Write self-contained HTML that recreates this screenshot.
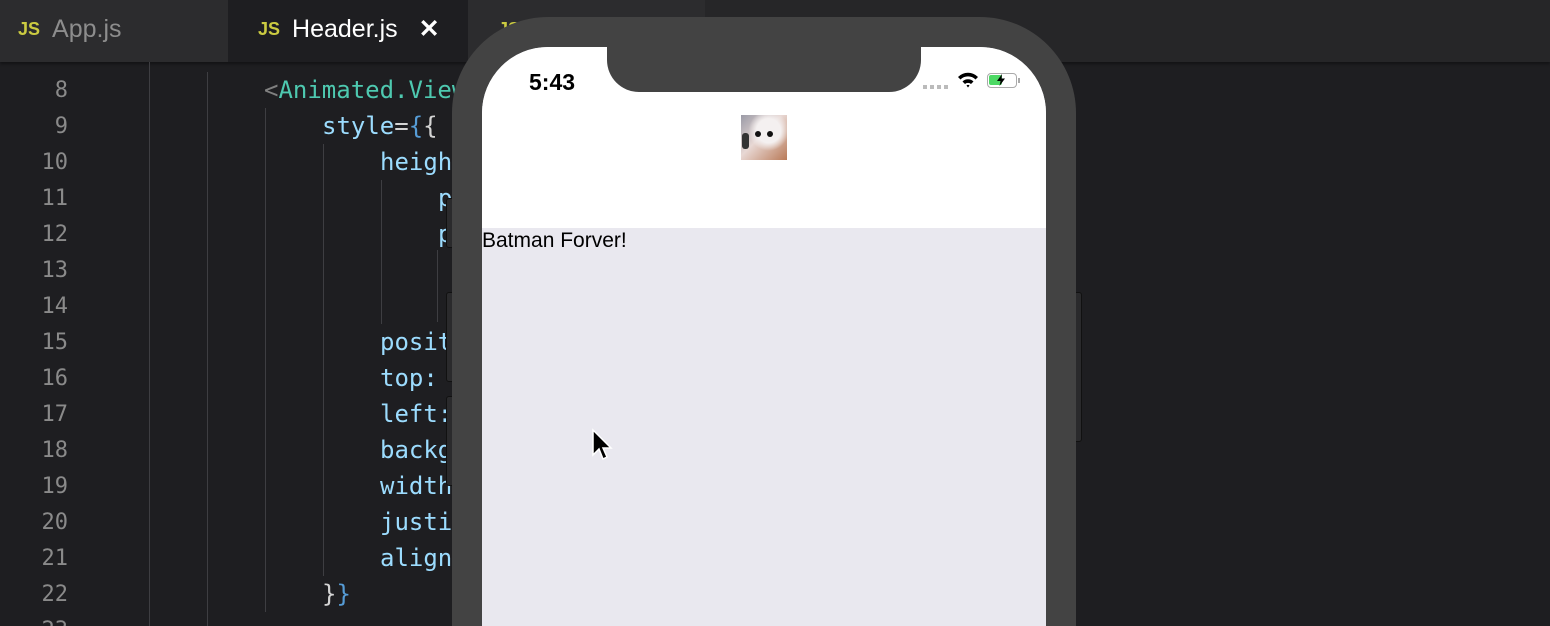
<!DOCTYPE html>
<html style="width:1550px;height:626px;overflow:hidden"><head><style>
*{margin:0;padding:0;box-sizing:border-box}
body{width:1550px;height:626px;overflow:hidden;background:#1e1e21;position:relative;font-family:"DejaVu Sans Mono","Liberation Mono",monospace}
.tabbar{position:absolute;left:0;top:0;width:1550px;height:62px;background:#262628;box-shadow:0 2px 3px rgba(0,0,0,.4)}
.tab{position:absolute;top:0;height:62px;font-family:"Liberation Sans",sans-serif;font-size:25px;line-height:58px}
.js{font-weight:bold;color:#cbcb41;font-size:18px;margin-right:12px;vertical-align:2px}
.ln{position:absolute;left:0;width:68px;text-align:right;color:#8a8a8a;font-size:22px}
.code{position:absolute;font-size:24px;color:#9cdcfe;white-space:pre}
.g{position:absolute;width:1px;background:#3e3e42}
</style></head><body>
<div class="tabbar"></div>
<div class="tab" style="left:0;width:228px;background:#2c2c2e;padding-left:18px;color:#8d8d8d"><span class="js">JS</span>App.js</div>
<div class="tab" style="left:228px;width:240px;background:#1e1e21;padding-left:30px;color:#fff"><span class="js">JS</span>Header.js <span style="margin-left:14px;font-weight:bold">✕</span></div>
<div class="tab" style="left:468px;width:237px;background:#2c2c2e;padding-left:30px;color:#8d8d8d"><span class="js">JS</span></div>

<div class="g" style="left:149px;top:62px;height:564px"></div>
<div class="g" style="left:207px;top:72px;height:554px"></div>
<div class="g" style="left:265px;top:108px;height:504px"></div>
<div class="g" style="left:323px;top:144px;height:432px"></div>
<div class="g" style="left:381px;top:180px;height:144px"></div>
<div class="g" style="left:437px;top:250px;height:72px"></div>

<div class="ln" style="top:78px">8</div>
<div class="ln" style="top:114px">9</div>
<div class="ln" style="top:150px">10</div>
<div class="ln" style="top:186px">11</div>
<div class="ln" style="top:222px">12</div>
<div class="ln" style="top:258px">13</div>
<div class="ln" style="top:294px">14</div>
<div class="ln" style="top:330px">15</div>
<div class="ln" style="top:366px">16</div>
<div class="ln" style="top:402px">17</div>
<div class="ln" style="top:438px">18</div>
<div class="ln" style="top:474px">19</div>
<div class="ln" style="top:510px">20</div>
<div class="ln" style="top:546px">21</div>
<div class="ln" style="top:582px">22</div>
<div class="ln" style="top:618px">23</div>

<div class="code" style="left:264px;top:76px"><span style="color:#808080">&lt;</span><span style="color:#4ec9b0">Animated.View</span></div>
<div class="code" style="left:322px;top:112px">style<span style="color:#d4d4d4">=</span><span style="color:#569cd6">{</span><span style="color:#d4d4d4">{</span></div>
<div class="code" style="left:380px;top:148px">height</div>
<div class="code" style="left:438px;top:184px">p</div>
<div class="code" style="left:438px;top:220px">p</div>
<div class="code" style="left:380px;top:328px">position</div>
<div class="code" style="left:380px;top:364px">top:</div>
<div class="code" style="left:380px;top:400px">left:</div>
<div class="code" style="left:380px;top:436px">backg</div>
<div class="code" style="left:380px;top:472px">width</div>
<div class="code" style="left:380px;top:508px">justi</div>
<div class="code" style="left:380px;top:544px">align</div>
<div class="code" style="left:322px;top:580px"><span style="color:#d4d4d4">}</span><span style="color:#569cd6">}</span></div>

<div style="position:absolute;left:446px;top:198px;width:10px;height:50px;background:#2a2a2c;border:1px solid #111;border-radius:3px"></div>
<div style="position:absolute;left:446px;top:292px;width:10px;height:90px;background:#2a2a2c;border:1px solid #111;border-radius:3px"></div>
<div style="position:absolute;left:446px;top:396px;width:10px;height:90px;background:#2a2a2c;border:1px solid #111;border-radius:3px"></div>
<div style="position:absolute;left:1072px;top:292px;width:10px;height:150px;background:#2a2a2c;border:1px solid #111;border-radius:3px"></div>

<div style="position:absolute;left:452px;top:17px;width:624px;height:609px;background:#434343;border-radius:96px 96px 0 0"></div>
<div style="position:absolute;left:482px;top:47px;width:564px;height:579px;background:#e9e8ef;border-radius:66px 66px 0 0;overflow:hidden">
  <div style="position:absolute;left:0;top:0;width:564px;height:181px;background:#fff"></div>
  <div style="position:absolute;left:125px;top:-2px;width:314px;height:47px;background:#434343;border-radius:0 0 32px 32px"></div>
  <div style="position:absolute;left:47px;top:22px;font-family:'Liberation Sans',sans-serif;font-size:23px;font-weight:bold;color:#000">5:43</div>
  <div style="position:absolute;left:441px;top:38px;width:26px;height:4px;background:repeating-linear-gradient(90deg,#bbb 0 4px,transparent 4px 7px)"></div>
  <svg style="position:absolute;left:474px;top:24px" width="24" height="18" viewBox="0 0 24 18"><path d="M2 6 A14 14 0 0 1 22 6 L19.5 8.5 A10.5 10.5 0 0 0 4.5 8.5Z M6.5 10.5 A8 8 0 0 1 17.5 10.5 L15 13 A4.5 4.5 0 0 0 9 13Z M10.5 14.5 A2 2 0 0 1 13.5 14.5 L12 16.5Z" fill="#000"/></svg>
  <div style="position:absolute;left:505px;top:26px;width:30px;height:15px;border:1.5px solid #aaa;border-radius:4px"><div style="position:absolute;left:1px;top:1px;width:13px;height:10px;background:#4cd964;border-radius:2px"></div><svg style="position:absolute;left:8px;top:0" width="10" height="12" viewBox="0 0 10 12"><path d="M6 0 L1 7 L4.5 7 L3.5 12 L9 4.5 L5.5 4.5 Z" fill="#000"/></svg></div>
  <div style="position:absolute;left:536px;top:31px;width:2px;height:5px;background:#aaa"></div>
  <div style="position:absolute;left:259px;top:68px;width:46px;height:45px;background:radial-gradient(circle at 60% 35%,#f4f0f0 0 30%,transparent 50%),linear-gradient(135deg,#9a9aa6,#e8d8d4 45%,#b97a58);"><div style="position:absolute;left:14px;top:16px;width:6px;height:6px;background:#111;border-radius:50%"></div><div style="position:absolute;left:26px;top:16px;width:6px;height:6px;background:#111;border-radius:50%"></div><div style="position:absolute;left:1px;top:18px;width:7px;height:16px;background:#333;border-radius:3px"></div></div>
  <div style="position:absolute;left:0;top:182px;font-family:'Liberation Sans',sans-serif;font-size:21px;color:#000">Batman Forver!</div>
</div>
<svg style="position:absolute;left:591px;top:428px" width="24" height="36" viewBox="0 0 24 36"><path d="M2 2 L2 27 L8 21 L12 31 L16 29 L12 20 L20 20 Z" fill="#000" stroke="#fff" stroke-width="1.5"/></svg>
</body></html>
